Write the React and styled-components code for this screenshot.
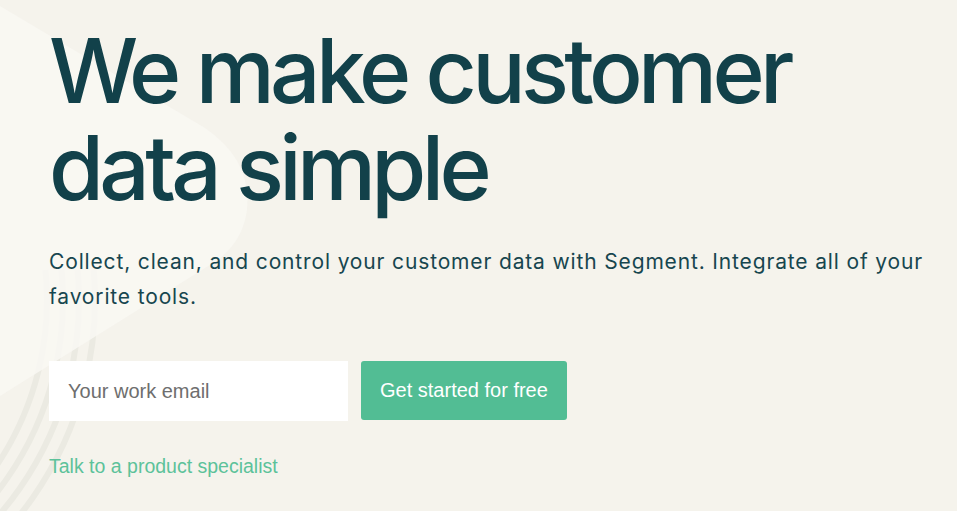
import styled, { createGlobalStyle } from "styled-components";

const GlobalStyle = createGlobalStyle`
  html, body {
    margin: 0;
    padding: 0;
    background: #f5f3ec;
  }
`;

const Page = styled.section`
  position: relative;
  width: 957px;
  height: 511px;
  overflow: hidden;
  background: #f5f3ec;
`;

const Backdrop = styled.svg`
  position: absolute;
  left: 0;
  top: 0;
  pointer-events: none;
`;

const Content = styled.div`
  position: relative;
  padding: 22px 0 0 49px;
  display: flex;
  flex-direction: column;
`;

const Title = styled.h1`
  margin: 0;
  font-family: Inter, "Noto Sans", sans-serif;
  font-weight: 500;
  font-size: 89px;
  line-height: 97px;
  letter-spacing: -4.7px;
  color: #12414a;
`;

const Lead = styled.p`
  margin: 28px 0 0;
  font-family: Inter, "Noto Sans", sans-serif;
  font-size: 21px;
  line-height: 35px;
  letter-spacing: 0.85px;
  color: #17464f;
  max-width: 890px;
`;

const Form = styled.form`
  display: flex;
  gap: 13px;
  margin-top: 47px;
`;

const EmailInput = styled.input`
  width: 299px;
  height: 60px;
  box-sizing: border-box;
  border: none;
  outline: none;
  padding: 0 19px;
  background: #fff;
  font-family: "Liberation Sans", Arial, sans-serif;
  font-size: 20px;
  color: #333;

  &::placeholder {
    color: #6e6e6e;
  }
`;

const Submit = styled.button`
  height: 59px;
  padding: 0 19px;
  border: none;
  border-radius: 3px;
  background: #52bd94;
  color: #fff;
  font-family: "Liberation Sans", Arial, sans-serif;
  font-size: 20px;
  cursor: pointer;
`;

const SpecialistLink = styled.a`
  margin-top: 34px;
  align-self: flex-start;
  font-family: "Liberation Sans", Arial, sans-serif;
  font-size: 19.5px;
  color: #5cc29a;
  text-decoration: none;
`;

const CX = -250;
const CY = 300;
const radii = [345, 329, 313, 297];

const arcPath = (r) => {
  const startY = 270;
  const startX = CX + Math.sqrt(r * r - (startY - CY) ** 2);
  const endX = CX + r * Math.cos(Math.PI / 2.4);
  const endY = CY + r * Math.sin(Math.PI / 2.4);
  return `M${startX} ${startY} A${r} ${r} 0 0 1 ${endX} ${endY}`;
};

export default function App() {
  return (
    <Page>
      <GlobalStyle />
      <Backdrop width="957" height="511" viewBox="0 0 957 511">
        {radii.map((r) => (
          <path
            key={r}
            d={arcPath(r)}
            fill="none"
            stroke="#ebeae2"
            strokeWidth="6"
          />
        ))}
        <path
          d="M0 6 L205 128 Q252 160 247 210 Q242 248 205 268 L0 396 Z"
          fill="#f9f8f3"
          opacity="0.85"
        />
      </Backdrop>
      <Content>
        <Title>
          We make customer
          <br />
          data simple
        </Title>
        <Lead>
          Collect, clean, and control your customer data with Segment. Integrate
          all of your favorite tools.
        </Lead>
        <Form onSubmit={(e) => e.preventDefault()}>
          <EmailInput type="email" placeholder="Your work email" />
          <Submit type="submit">Get started for free</Submit>
        </Form>
        <SpecialistLink href="#">Talk to a product specialist</SpecialistLink>
      </Content>
    </Page>
  );
}
